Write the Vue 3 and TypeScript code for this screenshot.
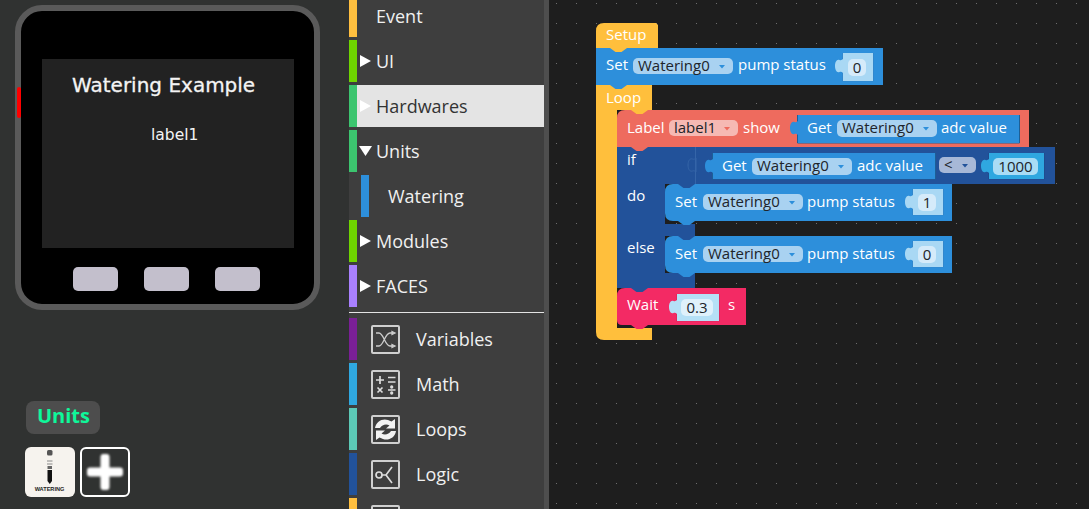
<script setup lang="ts">
interface Row { label: string; color: string; arrow?: 'right' | 'down'; active?: boolean; sub?: boolean }
interface Cat { label: string; color: string; icon: string }

const rows: Row[] = [
  { label: 'Event', color: '#ffbf3f' },
  { label: 'UI', color: '#6fd400', arrow: 'right' },
  { label: 'Hardwares', color: '#3cc56f', arrow: 'right', active: true },
  { label: 'Units', color: '#3cc56f', arrow: 'down' },
  { label: 'Watering', color: '#2d8fdb', sub: true },
  { label: 'Modules', color: '#6fd400', arrow: 'right' },
  { label: 'FACES', color: '#a980ff', arrow: 'right' }
]
const cats: Cat[] = [
  { label: 'Variables', color: '#7a1f96', icon: 'vars' },
  { label: 'Math', color: '#2fa8e0', icon: 'math' },
  { label: 'Loops', color: '#5cc9b6', icon: 'loops' },
  { label: 'Logic', color: '#22529a', icon: 'logic' },
  { label: '', color: '#ffbf3f', icon: 'none' }
]

const dark = '#22529a'
const blue = '#2d8fdb'
const yellow = '#ffbf3c'
const coral = '#ee6b5e'
const pink = '#f32a64'

function stmt(x: number, y: number, w: number, h: number, tl = 0, bl = 0): string {
  const right = x + w
  const bottom = y + h
  return `M${x} ${y + tl}Q${x} ${y} ${x + tl} ${y}H${right}V${bottom}H${x + bl}Q${x} ${bottom} ${x} ${bottom - bl}Z`
}
function bump(x: number, y: number): string {
  return `M${x} ${y}h17l-5.5 4h-6z`
}
function tab(x: number, y: number): string {
  return `M${x} ${y}c-1 1-2 1.500-3.500 1-3-1-4.500 2.500-4.500 6s1.500 7 4.500 6c1.500-.5 2.500 0 3.500 1z`
}
function edge(x: number, y: number, w: number, h: number): string {
  return `M${x} ${y}V${y + h}H${x + w}V${y}`
}

const shapes = [
  { d: 'M596 31Q596 23 604 23H656L658 25V48H596Z', fill: yellow },
  { d: 'M596 85H652V110H617V328H652V340H604Q596 340 596 332Z', fill: yellow },
  { d: stmt(596, 48, 287, 37), fill: blue },
  { d: stmt(617, 147, 438, 37), fill: dark },
  { d: stmt(617, 184, 48, 104), fill: dark },
  { d: stmt(665, 224, 30, 12), fill: dark },
  { d: stmt(665, 273, 30, 15), fill: dark },
  { d: stmt(617, 110, 412, 37, 8), fill: coral },
  { d: stmt(665, 184, 287, 37, 8, 8), fill: blue },
  { d: stmt(665, 236, 287, 37, 8, 8), fill: blue },
  { d: stmt(617, 288, 129, 37, 8, 5), fill: pink }
]
const bumps = [
  { x: 610, y: 48, fill: yellow },
  { x: 610, y: 85, fill: blue },
  { x: 631, y: 110, fill: yellow },
  { x: 631, y: 147, fill: coral },
  { x: 678, y: 184, fill: dark },
  { x: 678, y: 221, fill: blue },
  { x: 678, y: 236, fill: dark },
  { x: 678, y: 273, fill: blue },
  { x: 631, y: 288, fill: dark },
  { x: 631, y: 325, fill: pink }
]
const labels = [
  { t: 'Setup', x: 606, y: 40 },
  { t: 'Set', x: 606, y: 70 },
  { t: 'pump status', x: 738, y: 70 },
  { t: 'Loop', x: 606, y: 103 },
  { t: 'Label', x: 627, y: 133 },
  { t: 'show', x: 743, y: 133 },
  { t: 'Get', x: 807, y: 133 },
  { t: 'adc value', x: 941, y: 133 },
  { t: 'if', x: 627, y: 165 },
  { t: 'Get', x: 722, y: 171 },
  { t: 'adc value', x: 857, y: 171 },
  { t: 'do', x: 627, y: 201 },
  { t: 'Set', x: 675, y: 207 },
  { t: 'pump status', x: 807, y: 207 },
  { t: 'else', x: 627, y: 253 },
  { t: 'Set', x: 675, y: 259 },
  { t: 'pump status', x: 807, y: 259 },
  { t: 'Wait', x: 627, y: 310 },
  { t: 's', x: 728, y: 310 }
]
const drops = [
  { x: 633, y: 58, w: 100, h: 16, t: 'Watering0', fill: '#a9d2f1', arrow: '#2d8fdb' },
  { x: 669, y: 120, w: 69, h: 16, t: 'label1', fill: '#f6b9b3', arrow: '#ee6b5e' },
  { x: 837, y: 120, w: 100, h: 17, t: 'Watering0', fill: '#a9d2f1', arrow: '#2d8fdb' },
  { x: 752, y: 158, w: 100, h: 17, t: 'Watering0', fill: '#a9d2f1', arrow: '#2d8fdb' },
  { x: 939, y: 157, w: 37, h: 16, t: '<', fill: '#a7b8d7', arrow: '#22529a' },
  { x: 703, y: 194, w: 100, h: 16, t: 'Watering0', fill: '#a9d2f1', arrow: '#2d8fdb' },
  { x: 703, y: 246, w: 100, h: 16, t: 'Watering0', fill: '#a9d2f1', arrow: '#2d8fdb' }
]
const getBlocks = [
  { x: 797, y: 115, w: 222, h: 28, fill: blue, stroke: '#1d5f96' },
  { x: 712, y: 153, w: 223, h: 26, fill: blue, stroke: '#1d5f96' }
]
const sockets = [
  { x: 842, y: 53, w: 31, h: 28, fx: 848, fy: 59, fw: 18, t: '0', body: '#a9d8f4', field: '#d5ebfa', line: '#3a78ad' },
  { x: 912, y: 189, w: 31, h: 26, fx: 918, fy: 194, fw: 18, t: '1', body: '#a9d8f4', field: '#d5ebfa', line: '#3a78ad' },
  { x: 912, y: 241, w: 31, h: 26, fx: 918, fy: 246, fw: 18, t: '0', body: '#a9d8f4', field: '#d5ebfa', line: '#3a78ad' },
  { x: 676, y: 294, w: 43, h: 27, fx: 681, fy: 299, fw: 32, t: '0.3', body: '#b5e0f6', field: '#dff1fb', line: '#b3244f' },
  { x: 988, y: 153, w: 56, h: 26, fx: 993, fy: 158, fw: 45, t: '1000', body: '#2fa7e0', field: '#a9dcf5', line: '#1b3f78' }
]
</script>

<template>
  <div class="app">
    <section class="panel">
      <div class="device">
        <span class="side-key"></span>
        <div class="screen">
          <div class="title">Watering Example</div>
          <div class="label">label1</div>
        </div>
        <div class="keys">
          <span class="key"></span><span class="key"></span><span class="key"></span>
        </div>
      </div>
      <div class="units-badge">Units</div>
      <div class="unit-icons">
        <div class="unit-card">
          <svg width="50" height="50" viewBox="0 0 50 50">
            <rect x="22" y="3" width="5.500" height="5.500" rx="1.500" fill="#555" />
            <path d="M22 14h5.500M22 17h5.500" stroke="#888" stroke-width="1" />
            <path d="M22.500 19h4.500v3h-4.500z" fill="#666" />
            <path d="M22.500 23h4.500v11l-2.250 3-2.250-3z" fill="#111" />
            <text x="24.500" y="44" class="tiny" text-anchor="middle">WATERING</text>
          </svg>
        </div>
        <div class="add-card">
          <svg width="46" height="46" viewBox="0 0 46 46">
            <rect x="18.500" y="5" width="9" height="36" rx="3" fill="#fff" />
            <rect x="5" y="18.500" width="36" height="9" rx="3" fill="#fff" />
          </svg>
        </div>
      </div>
    </section>

    <nav class="menu">
      <div class="menu-rows">
        <div v-for="r in rows" :key="r.label" class="row" :class="{ active: r.active, sub: r.sub }">
          <span class="stripe" :style="{ background: r.color }"></span>
          <span class="arrow" :class="r.arrow"></span>
          <span class="row-label">{{ r.label }}</span>
        </div>
      </div>
      <hr class="divider" />
      <div class="cats">
        <div v-for="c in cats" :key="c.icon" class="cat">
          <span class="stripe" :style="{ background: c.color }"></span>
          <span class="cat-icon">
            <svg v-if="c.icon === 'vars'" width="25" height="25" viewBox="0 0 25 25" fill="none" stroke="#ccc" stroke-width="1.300">
              <path d="M3 6h3c4.500 0 6 13 11 13h3M3 19h3c4.500 0 6-13 11-13h3" />
              <path d="M19 4.500l3 1.500-3 1.500zM19 17.500l3 1.500-3 1.500z" fill="#ccc" />
            </svg>
            <svg v-else-if="c.icon === 'math'" width="25" height="25" viewBox="0 0 25 25" fill="none" stroke="#ddd" stroke-width="1.700">
              <path d="M3 8h8M7 4v8M15 5.500h7.500M15 10h7.500M4.500 15.500l5 5M9.500 15.500l-5 5M15 18h7.500" />
              <circle cx="18.700" cy="15" r=".8" fill="#ddd" />
              <circle cx="18.700" cy="21" r=".8" fill="#ddd" />
            </svg>
            <svg v-else-if="c.icon === 'loops'" width="25" height="25" viewBox="0 0 25 25" fill="#f2f2f2">
              <path d="M2 11C3 4 10 1 15 3l3.500 1.500L22 2v9.500h-9l3.500-3c-3-2-7.500-1-9.500 2.500z" />
              <path d="M23 14c-1 7-8 10-13 8l-3.500-1.500L3 23v-9.500h9l-3.500 3c3 2 7.500 1 9.500-2.500z" />
            </svg>
            <svg v-else-if="c.icon === 'logic'" width="25" height="25" viewBox="0 0 25 25" fill="none" stroke="#ddd" stroke-width="1.700">
              <circle cx="6" cy="13" r="3" />
              <path d="M9 13h4l6-8M13 13l6 8" />
            </svg>
          </span>
          <span class="cat-label">{{ c.label }}</span>
        </div>
      </div>
    </nav>

    <main class="canvas">
      <svg class="workspace" width="1089" height="509" viewBox="0 0 1089 509">
        <defs>
          <pattern id="dots" x="556" y="3" width="20" height="20" patternUnits="userSpaceOnUse">
            <rect width="1" height="1" fill="#6e6e6e" />
          </pattern>
        </defs>
        <rect x="549" width="540" height="509" fill="url(#dots)" />
        <path v-for="(s, i) in shapes" :key="'s' + i" :d="s.d" :fill="s.fill" />
        <path v-for="(b, i) in bumps" :key="'b' + i" :d="bump(b.x, b.y)" :fill="b.fill" />
        <path d="M695.500 147V184" stroke="#3565a8" stroke-width="1" />
        <path :d="tab(696, 158)" fill="none" stroke="#3565a8" />

        <g v-for="(g, i) in getBlocks" :key="'g' + i">
          <path :d="edge(g.x + 0.500, g.y, g.w, g.h)" fill="none" :stroke="g.stroke" />
          <rect :x="g.x + 1" :y="g.y" :width="g.w - 1" :height="g.h" :fill="g.fill" />
          <path :d="tab(g.x + 1, g.y + 6)" :fill="g.fill" />
        </g>
        <g v-for="(k, i) in sockets" :key="'k' + i">
          <path :d="edge(k.x + 0.500, k.y, k.w, k.h)" fill="none" :stroke="k.line" stroke-opacity=".3" />
          <rect :x="k.x + 1" :y="k.y" :width="k.w - 1" :height="k.h" :fill="k.body" />
          <path :d="tab(k.x + 1, k.y + 6)" :fill="k.body" />
          <rect :x="k.fx" :y="k.fy" :width="k.fw" :height="17" rx="5" :fill="k.field" />
          <text :x="k.fx + k.fw / 2" :y="k.fy + 13.500" class="dark" text-anchor="middle">{{ k.t }}</text>
        </g>
        <g v-for="(d, i) in drops" :key="'d' + i">
          <rect :x="d.x" :y="d.y" :width="d.w" :height="d.h" rx="5" :fill="d.fill" />
          <text :x="d.x + 5" :y="d.y + 13" class="dark">{{ d.t }}</text>
          <path :d="`M${d.x + d.w - 14} ${d.y + 7}h6l-3 3.500z`" :fill="d.arrow" />
        </g>
        <text v-for="(l, i) in labels" :key="'l' + i" :x="l.x" :y="l.y" class="white">{{ l.t }}</text>
      </svg>
    </main>
  </div>
</template>

<style>
html, body { margin: 0; background: #303231; }
</style>

<style scoped>
.app { position: relative; display: flex; width: 1089px; height: 509px; overflow: hidden; background: #303231; font-family: "Open Sans", "Noto Sans", sans-serif; }
.panel { width: 349px; flex: none; box-sizing: border-box; padding: 5px 0 0 15px; }
.device { position: relative; box-sizing: border-box; width: 305px; height: 305px; border: 6px solid #5a5a5a; border-radius: 27px; background: #000; padding: 48px 20px 0 21px; }
.side-key { position: absolute; left: -4px; top: 76px; width: 4px; height: 31px; border-radius: 2px; background: #f00; }
.screen { height: 189px; background: #222; color: #f4f4f4; font-family: "DejaVu Sans", sans-serif; overflow: hidden; }
.title { margin: 14px 0 0 30px; font-size: 20px; line-height: 24px; white-space: nowrap; -webkit-text-stroke: 0.3px #f4f4f4; }
.label { margin: 28px 0 0 109px; font-size: 15.500px; line-height: 20px; }
.keys { display: flex; gap: 26px; margin: 19px 0 0 31px; }
.key { width: 45px; height: 24px; border-radius: 5px; background: #c3bfcc; }
.units-badge { margin: 91px 0 0 11px; width: 74px; height: 33px; box-sizing: border-box; padding-left: 11px; border-radius: 8px; background: #4d4d4d; color: #0ff79a; font-weight: 700; font-size: 20px; line-height: 30px; }
.unit-icons { display: flex; gap: 5px; margin: 13px 0 0 10px; }
.unit-card { width: 50px; height: 50px; border-radius: 6px; background: #f6f3ee; }
.unit-card svg { display: block; }
.add-card { box-sizing: border-box; width: 50px; height: 50px; border: 2px solid #fff; border-radius: 6px; }
.add-card svg { display: block; filter: blur(0.8px); }
.tiny { font: 700 5.600px "Liberation Sans", sans-serif; fill: #222; }

.menu { width: 200px; flex: none; box-sizing: border-box; background: #3e3e3e; border-right: 5px solid #4e4e4e; }
.menu-rows { margin-top: -5px; display: flex; flex-direction: column; gap: 3px; }
.row { position: relative; display: flex; align-items: center; height: 42px; color: #f0f0f0; font-size: 18px; }
.row .stripe, .cat .stripe { width: 8px; height: 42px; flex: none; }
.row.active { background: linear-gradient(to right, transparent 8px, #e4e4e4 8px); color: #333; }
.row.sub { padding-left: 12px; }
.row.sub .row-label { margin-left: 19px; }
.arrow { width: 19px; height: 12px; flex: none; box-sizing: border-box; }
.row.sub .arrow { display: none; }
.arrow.right { margin-left: 3px; width: 16px; background: #fff; clip-path: polygon(0 0, 11px 50%, 0 100%); }
.arrow.down { margin-left: 2px; width: 17px; height: 10px; background: #fff; clip-path: polygon(0 0, 13px 0, 6.500px 100%); }
.divider { margin: 5px 0; border: 0; border-top: 1px solid #e4e4e4; }
.cats { display: flex; flex-direction: column; gap: 3px; }
.cat { display: flex; align-items: center; height: 42px; color: #f0f0f0; font-size: 18px; }
.cat-icon { box-sizing: border-box; width: 29px; height: 29px; margin-left: 14px; border: 2px solid #cfcfcf; border-radius: 2px; flex: none; }
.cat-icon svg { display: block; }
.cat-label { margin-left: 16px; }

.canvas { flex: 1; background: #1e1e1e; }
.workspace { position: absolute; left: 0; top: 0; }
.white { font-size: 15px; fill: #fff; }
.dark { font-size: 15px; fill: #20242a; }
</style>
